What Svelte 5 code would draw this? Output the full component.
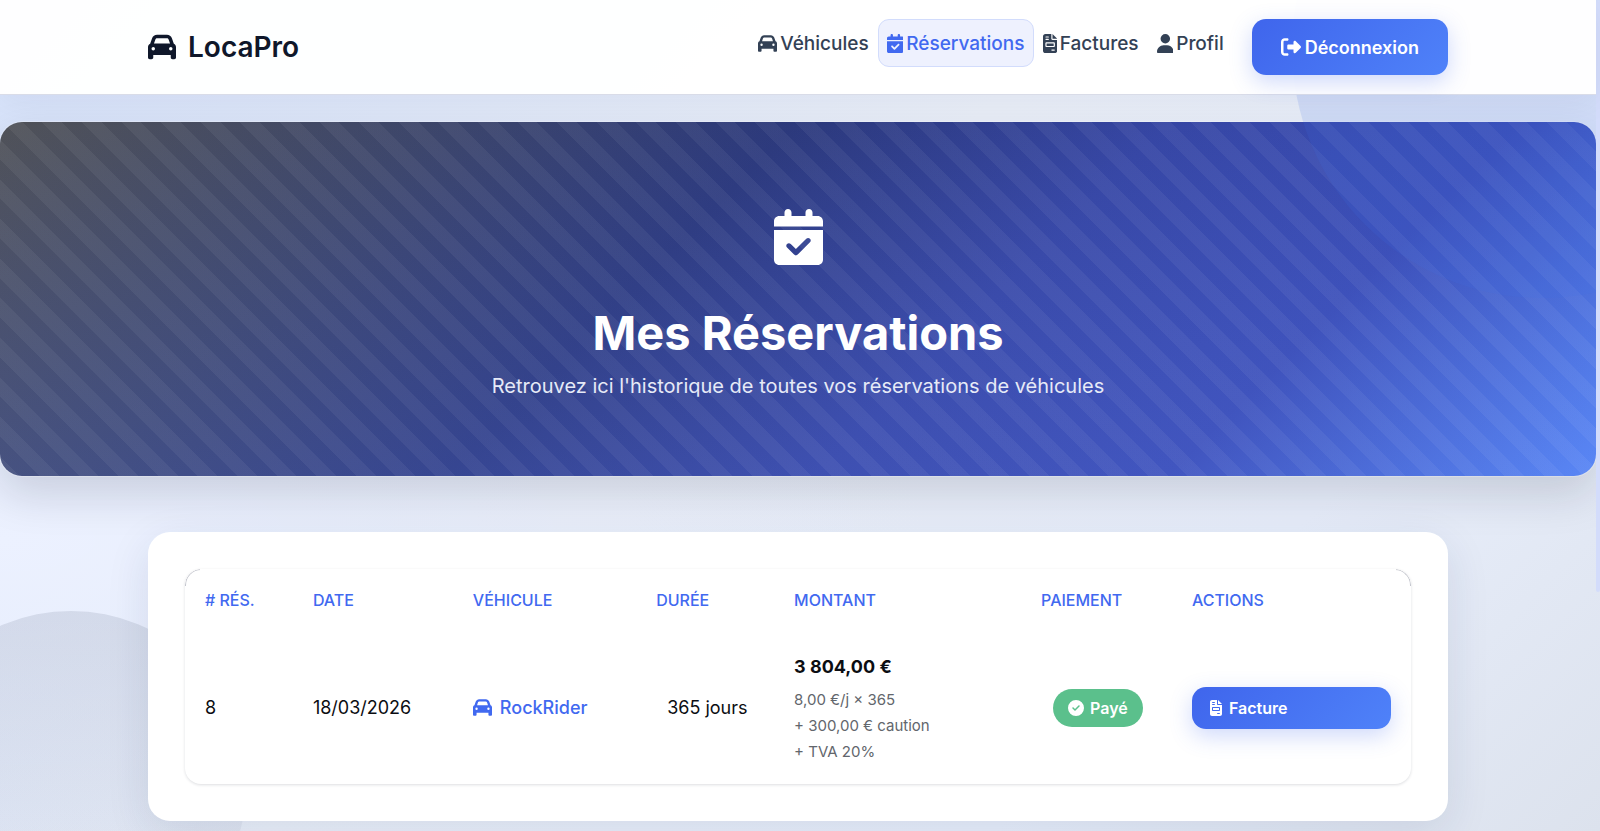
<script>
  const icons = {
    car: { w: 512, d: 'M135.2 117.4L109.1 192H402.9l-26.1-74.6C372.3 104.6 360.2 96 346.6 96H165.4c-13.6 0-25.7 8.6-30.2 21.4zM39.6 196.8L74.8 96.3C88.3 57.8 124.6 32 165.4 32H346.6c40.8 0 77.1 25.8 90.6 64.3l35.2 100.5c23.2 9.6 39.6 32.5 39.6 59.2V400v48c0 17.7-14.3 32-32 32H448c-17.7 0-32-14.3-32-32V400H96v48c0 17.7-14.3 32-32 32H32c-17.7 0-32-14.3-32-32V400 256c0-26.7 16.4-49.6 39.6-59.2zM128 288a32 32 0 1 0 -64 0 32 32 0 1 0 64 0zm288 32a32 32 0 1 0 0-64 32 32 0 1 0 0 64z' },
    calendar: { w: 448, d: 'M128 0c17.7 0 32 14.3 32 32V64H288V32c0-17.7 14.3-32 32-32s32 14.3 32 32V64h48c26.5 0 48 21.5 48 48v48H0V112C0 85.5 21.5 64 48 64H96V32c0-17.7 14.3-32 32-32zM0 192H448V464c0 26.5-21.5 48-48 48H48c-26.5 0-48-21.5-48-48V192zM329 305c9.4-9.4 9.4-24.6 0-33.9s-24.6-9.4-33.9 0l-95 95-47-47c-9.4-9.4-24.6-9.4-33.9 0s-9.4 24.6 0 33.9l64 64c9.4 9.4 24.6 9.4 33.9 0L329 305z' },
    invoice: { w: 384, d: 'M64 0C28.7 0 0 28.7 0 64V448c0 35.3 28.7 64 64 64H320c35.3 0 64-28.7 64-64V160H256c-17.7 0-32-14.3-32-32V0H64zM256 0V128H384L256 0zM80 64h64c8.8 0 16 7.2 16 16s-7.2 16-16 16H80c-8.8 0-16-7.2-16-16s7.2-16 16-16zm0 64h64c8.8 0 16 7.2 16 16s-7.2 16-16 16H80c-8.8 0-16-7.2-16-16s7.2-16 16-16zm16 96H288c17.7 0 32 14.3 32 32v64c0 17.7-14.3 32-32 32H96c-17.7 0-32-14.3-32-32V256c0-17.7 14.3-32 32-32zm0 32v64H288V256H96zM240 416h64c8.8 0 16 7.2 16 16s-7.2 16-16 16H240c-8.8 0-16-7.2-16-16s7.2-16 16-16z' },
    user: { w: 448, d: 'M224 256A128 128 0 1 0 224 0a128 128 0 1 0 0 256zm-45.7 48C79.8 304 0 383.8 0 482.3C0 498.7 13.3 512 29.7 512H418.3c16.4 0 29.7-13.3 29.7-29.7C448 383.8 368.2 304 269.7 304H178.3z' },
    exit: { w: 512, d: 'M377.9 105.9L500.7 228.7c7.2 7.2 11.3 17.1 11.3 27.3s-4.1 20.1-11.3 27.3L377.9 406.1c-6.4 6.4-15 9.9-24 9.9c-18.7 0-33.9-15.2-33.9-33.9l0-62.1-128 0c-17.7 0-32-14.3-32-32l0-64c0-17.7 14.3-32 32-32l128 0 0-62.1c0-18.7 15.2-33.9 33.9-33.9c9 0 17.6 3.6 24 9.9zM160 96L96 96c-17.7 0-32 14.3-32 32l0 256c0 17.7 14.3 32 32 32l64 0c17.7 0 32 14.3 32 32s-14.3 32-32 32l-64 0c-53 0-96-43-96-96L0 128C0 75 43 32 96 32l64 0c17.7 0 32 14.3 32 32s-14.3 32-32 32z' },
    check: { w: 512, d: 'M256 512A256 256 0 1 0 256 0a256 256 0 1 0 0 512zM369 209L241 337c-9.4 9.4-24.6 9.4-33.9 0l-64-64c-9.4-9.4-9.4-24.6 0-33.9s24.6-9.4 33.9 0l47 47L335 175c9.4-9.4 24.6-9.4 33.9 0s9.4 24.6 0 33.9z' }
  };
  const links = [
    { label: 'Véhicules', icon: 'car' },
    { label: 'Réservations', icon: 'calendar', active: true },
    { label: 'Factures', icon: 'invoice' },
    { label: 'Profil', icon: 'user' }
  ];
  const reservations = [
    { id: 8, date: '18/03/2026', vehicle: 'RockRider', days: 365, total: '3 804,00 €', details: ['8,00 €/j × 365', '+ 300,00 € caution', '+ TVA 20%'], status: 'Payé' }
  ];
</script>

{#snippet icon(name)}
  <svg class="icon" viewBox="0 0 {icons[name].w} 512" style:aspect-ratio="{icons[name].w} / 512" aria-hidden="true"><path d={icons[name].d} /></svg>
{/snippet}

<div class="page">
  <div class="blob blob-right"></div>
  <div class="blob blob-left"></div>

  <header>
    <div class="container bar">
      <a class="brand" href="#accueil">{@render icon('car')}LocaPro</a>
      <nav>
        {#each links as link}
          <a class="link" class:active={link.active} href="#{link.icon}">{@render icon(link.icon)}{link.label}</a>
        {/each}
        <button class="primary logout" type="button">{@render icon('exit')}Déconnexion</button>
      </nav>
    </div>
  </header>

  <section class="hero">
    <div class="hero-icon">{@render icon('calendar')}</div>
    <h1>Mes Réservations</h1>
    <p>Retrouvez ici l'historique de toutes vos réservations de véhicules</p>
  </section>

  <main class="container card">
    <div class="frame">
      <table>
        <colgroup>
          <col style:width="8.8%" /><col style:width="13.05%" /><col style:width="14.95%" /><col style:width="11.25%" /><col style:width="20.15%" /><col style:width="12.3%" /><col style:width="19.5%" />
        </colgroup>
        <thead>
          <tr><th># Rés.</th><th>Date</th><th>Véhicule</th><th>Durée</th><th>Montant</th><th>Paiement</th><th>Actions</th></tr>
        </thead>
        <tbody>
          {#each reservations as r}
            <tr>
              <td>{r.id}</td>
              <td>{r.date}</td>
              <td><span class="vehicle">{@render icon('car')}{r.vehicle}</span></td>
              <td><span class="days">{r.days} jours</span></td>
              <td class="amount">
                <strong>{r.total}</strong>
                {#each r.details as line}<small>{line}</small>{/each}
              </td>
              <td><span class="badge">{@render icon('check')}{r.status}</span></td>
              <td><button class="primary facture" type="button">{@render icon('invoice')}Facture</button></td>
            </tr>
          {/each}
        </tbody>
      </table>
    </div>
  </main>
  <div class="scroll-thumb"></div>
</div>

<style>
  :global(body) {
    margin: 0;
    background: #dfe4ee;
  }
  .page {
    position: relative;
    box-sizing: border-box;
    min-height: 100vh;
    padding-right: 4px;
    overflow: hidden;
    font-family: Inter, 'Open Sans', sans-serif;
    font-size: 18px;
    color: #0b0d12;
    background:
      radial-gradient(ellipse at 0 65%, #ecf1ff 0, rgba(236, 241, 255, 0) 42%),
      linear-gradient(135deg, #d6e2fb 0%, #eaeff9 45%, #e8eefb 75%, #dce2ed 100%);
  }
  .icon {
    height: 1em;
    fill: currentColor;
    flex: none;
  }
  .blob {
    position: absolute;
    border-radius: 50%;
  }
  .blob-right {
    width: 500px;
    height: 500px;
    top: -202px;
    right: -192px;
    background: rgba(65, 115, 235, 0.14);
  }
  .blob-left {
    width: 350px;
    height: 350px;
    left: -104px;
    top: 611px;
    background: linear-gradient(rgba(15, 30, 62, 0.1), rgba(60, 90, 140, 0.02));
  }
  .container {
    box-sizing: border-box;
    width: calc(100% - 48px);
    max-width: 1300px;
    margin: 0 auto;
  }
  header {
    position: relative;
    z-index: 1;
    background: rgba(255, 255, 255, 0.97);
    border-bottom: 1px solid #d9dce8;
    box-shadow: 0 8px 32px rgba(15, 23, 42, 0.05);
  }
  .bar {
    display: flex;
    align-items: center;
    justify-content: space-between;
    padding: 19px 0;
  }
  .brand {
    display: flex;
    align-items: center;
    gap: 12px;
    color: #0f172a;
    font-size: 28px;
    font-weight: 600;
    text-decoration: none;
  }
  nav {
    display: flex;
    align-items: flex-start;
  }
  .link {
    display: flex;
    align-items: center;
    gap: 3px;
    box-sizing: border-box;
    height: 48px;
    padding: 0 8px;
    border: 1px solid transparent;
    border-radius: 11px;
    color: #334155;
    font-size: 19px;
    font-weight: 500;
    text-decoration: none;
  }
  .link.active {
    color: #4169f0;
    background: #eef1fe;
    border-color: #d2dcfc;
  }
  .primary {
    display: flex;
    align-items: center;
    border: 0;
    color: #fff;
    font-family: inherit;
    font-weight: 600;
    background: linear-gradient(135deg, #3f65ec, #4f82f9);
    box-shadow: 0 7px 22px rgba(65, 105, 240, 0.25);
  }
  .logout {
    justify-content: center;
    gap: 4px;
    height: 56px;
    margin-left: 19px;
    padding: 0 29px;
    border-radius: 14px;
    font-size: 18px;
  }
  .logout .icon {
    height: 20px;
  }
  .hero {
    display: flex;
    flex-direction: column;
    align-items: center;
    box-sizing: border-box;
    margin-top: 27px;
    padding: 87px 24px 74px;
    border-radius: 22px;
    color: #fff;
    text-align: center;
    background:
      repeating-linear-gradient(45deg, rgba(255, 255, 255, 0.05) 0 14px, transparent 14px 28px),
      linear-gradient(transparent, rgba(96, 122, 232, 0.2)),
      linear-gradient(135deg, #505258 0%, #3d466a 22%, #2c397c 41%, #3646a4 60%, #3a4db6 78%, #588af9 100%);
    box-shadow:
      0 0 0 1px rgba(255, 255, 255, 0.25),
      0 18px 44px rgba(15, 23, 42, 0.15);
  }
  .hero-icon {
    display: flex;
    font-size: 56px;
  }
  h1 {
    margin: 36px 0 0;
    font-size: 47px;
    line-height: 64px;
    font-weight: 700;
  }
  .hero p {
    margin: 5px 0 0;
    font-size: 20px;
    line-height: 32px;
    color: #e6eaf7;
  }
  .card {
    position: relative;
    margin-top: 56px;
    padding: 37px;
    border-radius: 22px;
    background: #fff;
    box-shadow: 0 12px 44px rgba(30, 41, 90, 0.11);
  }
  .frame {
    position: relative;
    overflow: hidden;
    border-radius: 16px;
    box-shadow: 0 1px 3px rgba(15, 23, 42, 0.14);
  }
  .frame::before {
    content: '';
    position: absolute;
    inset: 0 0 auto;
    height: 16px;
    border: 1px solid #c4c6ce;
    border-bottom: 0;
    border-radius: 16px 16px 0 0;
    mask: linear-gradient(90deg, #000 15px, transparent 15px calc(100% - 15px), #000 calc(100% - 15px));
    pointer-events: none;
  }
  table {
    width: 100%;
    table-layout: fixed;
    border-collapse: collapse;
  }
  th,
  td {
    padding: 0 20px;
    text-align: left;
  }
  th {
    height: 62px;
    color: #4169f0;
    font-size: 16px;
    font-weight: 500;
    text-transform: uppercase;
    white-space: nowrap;
  }
  td {
    height: 153px;
    white-space: nowrap;
  }
  .amount {
    box-sizing: border-box;
    padding-top: 4px;
  }
  strong,
  small {
    display: block;
    line-height: 26px;
  }
  strong {
    margin-bottom: 7px;
    font-weight: 700;
  }
  small {
    color: #62666c;
    font-size: 15px;
  }
  .vehicle {
    display: flex;
    align-items: center;
    gap: 8px;
    color: #4169f0;
    font-weight: 500;
  }
  .vehicle .icon {
    height: 19px;
  }
  .days {
    padding-left: 11px;
  }
  .badge {
    display: inline-flex;
    align-items: center;
    gap: 6px;
    height: 38px;
    margin-left: 12px;
    padding: 0 15px;
    border-radius: 19px;
    color: #fff;
    font-size: 16px;
    font-weight: 600;
    background: #5bc08c;
  }
  .facture {
    gap: 7px;
    width: 100%;
    height: 42px;
    padding: 0 18px;
    border-radius: 14px;
    font-size: 16px;
  }
  .scroll-thumb {
    position: absolute;
    top: 0;
    right: 0;
    width: 4px;
    height: 592px;
    border-radius: 2px;
    background: #d3dcfb;
  }
</style>
